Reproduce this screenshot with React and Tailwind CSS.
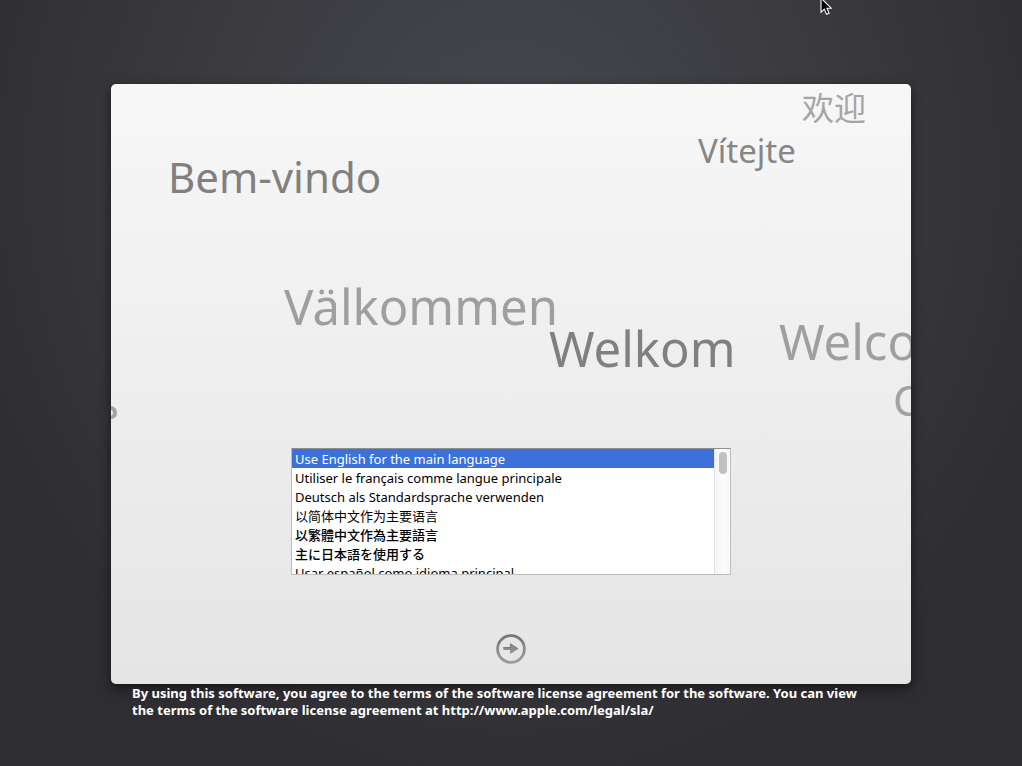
const LATIN = "font-['Noto_Sans','Noto_Sans_CJK_SC',sans-serif]";

const greetings = [
  { text: "欢迎", lang: "zh-Hans", style: "left-[691px] top-[6px] text-[32px] leading-[32px] text-[#a5a5a5] font-['Noto_Sans_CJK_SC',sans-serif]" },
  { text: "Vítejte", lang: "cs", style: "left-[587px] top-[50px] text-[33px] leading-[33px] text-[#868686]" },
  { text: "Bem-vindo", lang: "pt", style: "left-[57px] top-[72px] text-[42px] leading-[42px] text-[#808080]" },
  { text: "Välkommen", lang: "sv", style: "left-[173px] top-[198px] text-[49px] leading-[49px] text-[#9f9f9f]" },
  { text: "Welkom", lang: "nl", style: "left-[438px] top-[240px] text-[49px] leading-[49px] text-[#808080]" },
  { text: "Welcome", lang: "en", style: "left-[668px] top-[233px] text-[49px] leading-[49px] text-[#9f9f9f]" },
  { text: "C", lang: "it", style: "left-[782px] top-[295px] text-[42px] leading-[42px] text-[#a2a2a2]" },
  { text: "مرحبا", lang: "ar", style: "right-[calc(100%-9px)] top-[300px] text-[40px] leading-[40px] text-[#a2a2a2] font-['DejaVu_Sans',sans-serif]" },
];

const languages = [
  { value: "en", label: "Use English for the main language", style: "pt-px" },
  { value: "fr", label: "Utiliser le français comme langue principale", style: "pt-px" },
  { value: "de", label: "Deutsch als Standardsprache verwenden", style: "pt-px" },
  { value: "zh-Hans", label: "以简体中文作为主要语言", style: "pt-0 font-['Noto_Sans_CJK_SC',sans-serif]" },
  { value: "zh-Hant", label: "以繁體中文作為主要語言", style: "pt-0 font-['Noto_Sans_CJK_TC',sans-serif] font-medium" },
  { value: "ja", label: "主に日本語を使用する", style: "pt-0 font-['Noto_Sans_CJK_JP',sans-serif] font-medium" },
  { value: "es", label: "Usar español como idioma principal", style: "pt-px" },
];

function Greetings() {
  return (
    <div className="relative h-[364px] w-full">
      {greetings.map((g) => (
        <span key={g.lang} lang={g.lang} className={`absolute whitespace-nowrap ${g.style}`}>
          {g.text}
        </span>
      ))}
    </div>
  );
}

function LanguageList() {
  return (
    <div className="relative flex h-[127px] w-full max-w-[440px] overflow-hidden border border-[#bdbdbd] border-t-[#8e8e8e] bg-white">
      <select
        size={7}
        defaultValue="en"
        aria-label="Main language"
        className={`h-full min-w-0 flex-1 appearance-none overflow-hidden rounded-none border-0 bg-white p-0 text-[13px] text-black outline-none [scrollbar-width:none] ${LATIN}`}
      >
        {languages.map((l) => (
          <option
            key={l.value}
            value={l.value}
            className={`h-[19px] min-h-0 overflow-hidden px-[3px] pb-0 checked:bg-[linear-gradient(#3c71d9,#3c71d9)] checked:text-white ${l.style}`}
          >
            {l.label}
          </option>
        ))}
      </select>
      <div className="flex w-4 justify-center border-l border-[#e4e4e4] bg-linear-to-r from-[#f4f4f4] via-[#fcfcfc] to-[#f8f8f8] pt-[3px]">
        <div className="h-[22px] w-2 rounded-full bg-[#c1c1c1]" />
      </div>
    </div>
  );
}

function ContinueButton() {
  return (
    <button type="button" aria-label="Continue" className="size-[30px] rounded-full">
      <svg viewBox="0 0 30 30" className="size-[30px]">
        <defs>
          <linearGradient id="ring" x1="0" y1="0" x2="0" y2="1">
            <stop offset="0" stopColor="#7c7c7c" />
            <stop offset="1" stopColor="#9c9c9c" />
          </linearGradient>
        </defs>
        <circle cx="15" cy="15" r="13.4" fill="none" stroke="url(#ring)" strokeWidth="2.8" />
        <path d="M2.2 9.5a14 14 0 0 1 25.6 0" fill="none" stroke="#686868" strokeWidth="0.7" />
        <path d="M7.3 13.4h6.9V9.4l8.2 5.3-8.2 5.3v-4H7.3z" fill="#8d8d8d" />
        <path d="M7.3 13.5h7.1V9.8l7.4 4.8" fill="none" stroke="#707070" strokeWidth="0.8" />
      </svg>
    </button>
  );
}

function Pointer() {
  return (
    <svg viewBox="0 0 12 19" className="pointer-events-none absolute left-[820px] -top-[3px] h-[19px] w-3" aria-hidden="true">
      <path d="M1 1v14.2l3.3-3.1 2.2 5.2 2.6-1.1-2.2-5H11.2z" fill="#000" stroke="#fff" strokeWidth="1.1" />
    </svg>
  );
}

export default function App() {
  return (
    <main className={`relative flex min-h-screen flex-col items-center overflow-hidden bg-[#2d2c30] bg-[radial-gradient(ellipse_580px_640px_at_50%_22%,#48494f_0%,#3f4045_32%,#38373c_65%,#2e2d31_100%)] pt-[84px] ${LATIN}`}>
      <section className="flex w-full max-w-[800px] flex-col items-center overflow-hidden rounded-[5px] bg-linear-to-b from-[#f7f7f7] to-[#e5e5e5] pb-5 shadow-[0_4px_12px_rgba(0,0,0,0.55)]">
        <Greetings />
        <LanguageList />
        <div className="mt-[59px] flex">
          <ContinueButton />
        </div>
      </section>
      <p className="w-full max-w-[800px] pt-px pr-8 pl-[21px] text-[13px] leading-[17px] font-bold text-white">
        By using this software, you agree to the terms of the software license agreement for the software. You can view the terms of the software license agreement at http://www.apple.com/legal/sla/
      </p>
      <Pointer />
    </main>
  );
}
